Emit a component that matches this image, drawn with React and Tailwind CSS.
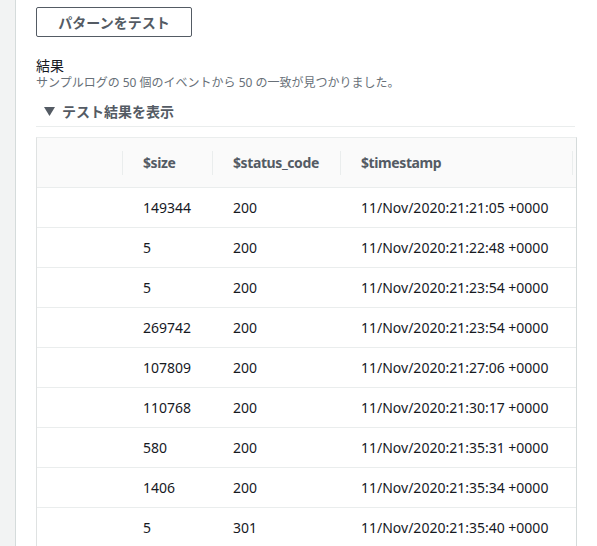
import React from "react";

const rows = [
  ["149344", "200", "11/Nov/2020:21:21:05 +0000"],
  ["5", "200", "11/Nov/2020:21:22:48 +0000"],
  ["5", "200", "11/Nov/2020:21:23:54 +0000"],
  ["269742", "200", "11/Nov/2020:21:23:54 +0000"],
  ["107809", "200", "11/Nov/2020:21:27:06 +0000"],
  ["110768", "200", "11/Nov/2020:21:30:17 +0000"],
  ["580", "200", "11/Nov/2020:21:35:31 +0000"],
  ["1406", "200", "11/Nov/2020:21:35:34 +0000"],
  ["5", "301", "11/Nov/2020:21:35:40 +0000"],
];

export default function App() {
  return (
    <div
      className="flex min-h-[546px] h-[546px] overflow-hidden bg-white text-[#16191f]"
      style={{ fontFamily: '"Noto Sans", "Noto Sans CJK JP", sans-serif' }}
    >
      <div className="w-[16px] shrink-0 bg-[#f2f3f3] border-r border-[#d5dbdb]" />
      <div className="pl-[20px] w-[561px] shrink-0">
        <button className="mt-[7px] h-[30px] w-[156px] border border-[#545b64] rounded-[2px] text-[14px] font-bold text-[#545b64] flex items-center justify-center">
          パターンをテスト
        </button>
        <div className="mt-[20px] text-[14px] leading-[18px] text-[#16191f]">結果</div>
        <div className="text-[12px] leading-[16px] text-[#687078]">
          サンプルログの 50 個のイベントから 50 の一致が見つかりました。
        </div>
        <div className="mt-[10px] h-[20px] flex items-center text-[14px] font-bold text-[#545b64]">
          <svg width="11" height="9" viewBox="0 0 11 9" className="ml-[8px] mr-[7px]">
            <polygon points="0,0 11,0 5.5,9" fill="#545b64" />
          </svg>
          <span>テスト結果を表示</span>
        </div>
        <div className="mt-[5px] border-t border-[#eaeded] w-[539px]" />
        <div className="mt-[10px] w-[541px] border-t border-l border-r border-[#eaeded] border-r-[#d5dbdb] border-l-[#dfe2e2]">
          <div className="grid grid-cols-[85px_90px_128px_232px_4px] h-[50px] bg-[#fafafa] border-b border-[#eaeded] items-center text-[14px] font-bold tracking-[-0.4px] text-[#545b64]">
            <div />
            <div className="border-l border-[#eaeded] h-[24px] flex items-center pl-[20px]">$size</div>
            <div className="border-l border-[#eaeded] h-[24px] flex items-center pl-[20px]">$status_code</div>
            <div className="border-l border-[#eaeded] h-[24px] flex items-center pl-[20px]">$timestamp</div>
            <div className="border-l border-[#eaeded] h-[24px]" />
          </div>
          {rows.map((r, i) => (
            <div
              key={i}
              className="grid grid-cols-[85px_90px_128px_232px_4px] h-[40px] border-b border-[#eaeded] items-center text-[14px] text-[#16191f]"
            >
              <div />
              <div className="pl-[21px]">{r[0]}</div>
              <div className="pl-[21px]">{r[1]}</div>
              <div className="pl-[21px]">{r[2]}</div>
              <div />
            </div>
          ))}
        </div>
      </div>
    </div>
  );
}
